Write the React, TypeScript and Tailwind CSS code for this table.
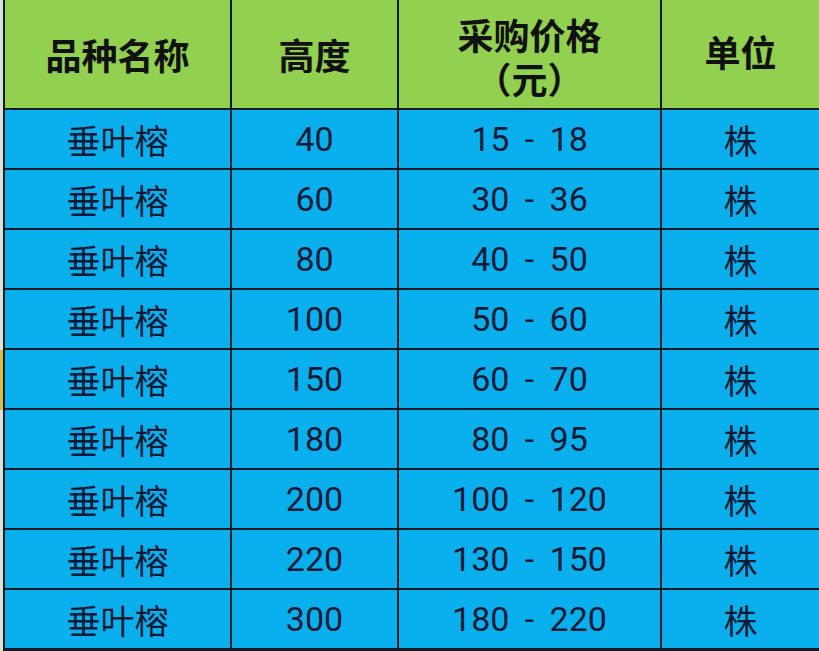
const rows = [
  ["40", "15 - 18"],
  ["60", "30 - 36"],
  ["80", "40 - 50"],
  ["100", "50 - 60"],
  ["150", "60 - 70"],
  ["180", "80 - 95"],
  ["200", "100 - 120"],
  ["220", "130 - 150"],
  ["300", "180 - 220"],
];

const head = "bg-[#92d050] flex items-center justify-center text-[36px] font-bold text-[#111] font-['Noto_Sans_CJK_SC',sans-serif]";
const cjkCell = "bg-[#0ab0ee] flex items-center justify-center text-[34px] text-[#0c1a36] font-['Noto_Sans_CJK_SC',sans-serif]";
const numCell = "bg-[#0ab0ee] flex items-center justify-center text-[34px] text-[#0c1a36] font-['Roboto','Noto_Sans_CJK_SC',sans-serif] whitespace-pre";

export default function App() {
  return (
    <div className="flex w-[819px] h-[651px] bg-[#0f1a24] overflow-hidden">
      {/* left edge strip */}
      <div className="flex flex-col w-[3px] bg-[#d9e2d4]">
        <div className="h-[350px]" />
        <div className="h-[60px] bg-[#d8c048]" />
      </div>
      <div className="flex-1 grid grid-cols-[225px_165px_261px_1fr] grid-rows-[108px_repeat(9,58px)] gap-[2px] pl-[2px] pb-[2px]">
        <div className={head}>品种名称</div>
        <div className={head}>高度</div>
        <div className={`${head} flex-col leading-[44px] pt-[4px]`}>
          <span className="block">采购价格</span>
          <span className="block">（元）</span>
        </div>
        <div className={`${head} pb-[6px]`}>单位</div>
        {rows.map(([h, p], i) => (
          <div key={i} className="contents">
            <div className={cjkCell}>垂叶榕</div>
            <div className={numCell}>{h}</div>
            <div className={numCell}>{p.replace(/ - /, " \u2009- \u2009")}</div>
            <div className={cjkCell}>株</div>
          </div>
        ))}
      </div>
    </div>
  );
}
